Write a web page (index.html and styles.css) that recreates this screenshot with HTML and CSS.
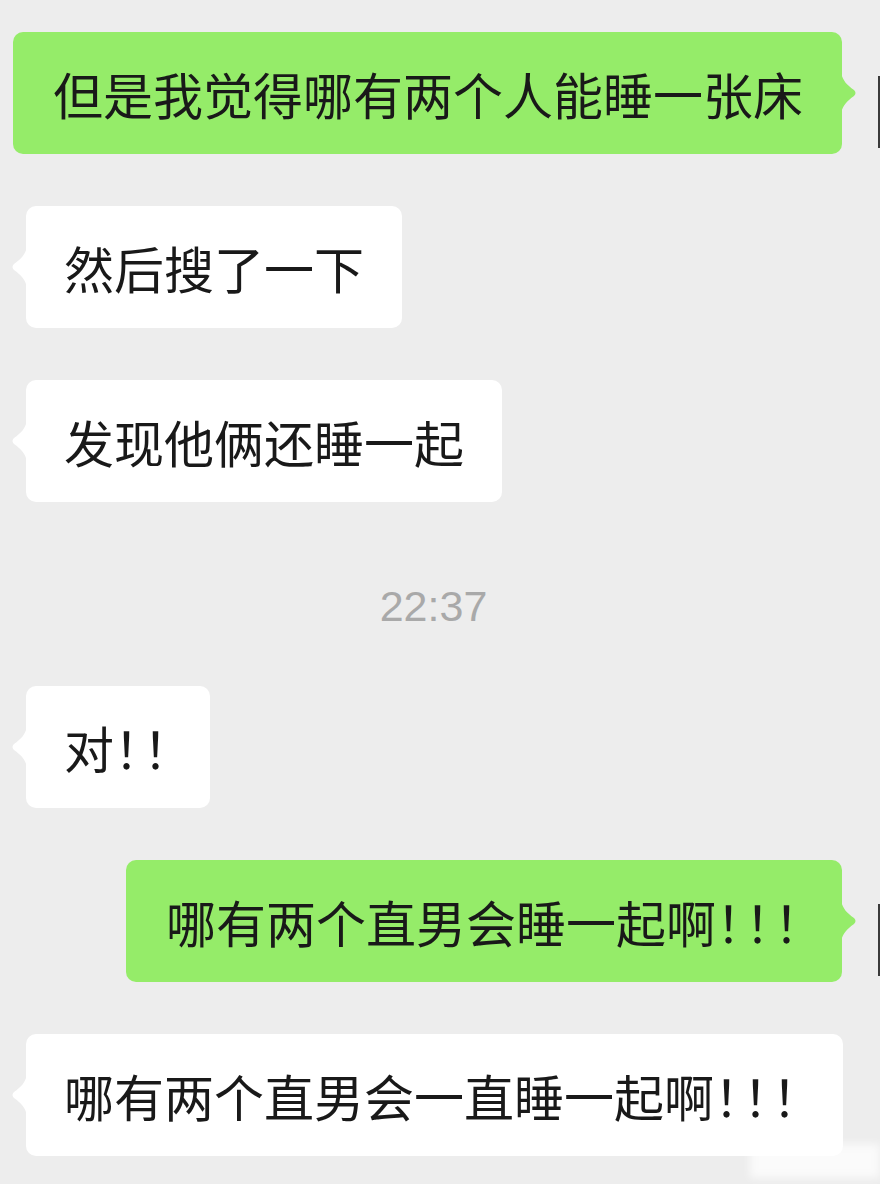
FILE: index.html
```html
<!DOCTYPE html>
<html lang="zh-CN">

<head>
  <meta charset="UTF-8">
  <meta name="viewport" content="width=device-width, initial-scale=1.0">
  <title>聊天记录</title>
  <link rel="stylesheet" href="styles.css">
</head>

<body>
  <main>
    <ul>
      <li class="row me">
        <p class="bubble">但是我觉得哪有两个人能睡一张床</p>
        <span class="avatar"></span>
      </li>
      <li class="row other">
        <p class="bubble">然后搜了一下</p>
      </li>
      <li class="row other">
        <p class="bubble">发现他俩还睡一起</p>
      </li>
      <li class="time">22:37</li>
      <li class="row other">
        <p class="bubble">对<span class="bang">！！</span></p>
      </li>
      <li class="row me">
        <p class="bubble">哪有两个直男会睡一起啊<span class="bang">！！！</span></p>
        <span class="avatar"></span>
      </li>
      <li class="row other">
        <p class="bubble wide">哪有两个直男会一直睡一起啊<span class="bang">！！！</span></p>
      </li>
    </ul>
  </main>

  <div class="watermark"></div>
</body>

</html>
```

FILE: styles.css
```css
body {
  margin: 0;
  background-color: #ededed;
  font-family: "Noto Sans CJK SC", "Noto Sans", sans-serif;
  color: #191919;
  overflow: hidden;
  height: 100vh;
  position: relative;
}

main {
  padding-top: 32px;
}

ul {
  display: flex;
  flex-direction: column;
  gap: 52px;
  list-style: none;
  margin: 0;
  padding: 0;
}

.row {
  display: flex;
  align-items: flex-start;

  &.other {
    padding-left: 26px;
  }

  &.me {
    justify-content: flex-end;
  }
}

.bubble {
  flex: none;
  position: relative;
  margin: 0;
  padding: 36px 38px;
  font-size: 50px;
  line-height: 50px;
  border-radius: 10px;
  white-space: nowrap;
  background-color: #fff;

  &::after {
    content: "";
    position: absolute;
    top: 50%;
    width: 16px;
    height: 40px;
    margin-top: -20px;
    background: inherit;
  }

  &.wide {
    padding-right: 42px;
  }
}

.other .bubble::after {
  left: -15px;
  clip-path: path("M16 0 C14 8 10 12 3 17 Q0 20 3 23 C10 28 14 32 16 40 Z");
}

.me .bubble {
  background-color: #95ec69;
  padding: 36px 39px 36px 40px;

  &::after {
    right: -15px;
    clip-path: path("M0 0 C2 8 6 12 13 17 Q16 20 13 23 C6 28 2 32 0 40 Z");
  }
}

.bang {
  font-feature-settings: "halt";
  letter-spacing: 4px;
}

/* only the edge of the avatar shows at the right */
.avatar {
  flex: none;
  width: 2px;
  height: 72px;
  margin: 44px 0 0 36px;
  background-color: #3a3a3a;
}

.time {
  padding: 27px 13px 3px 0;
  text-align: center;
  font-family: "Liberation Sans", Arial, sans-serif;
  font-size: 43px;
  line-height: 50px;
  color: #a9a9a9;
}

.watermark {
  position: absolute;
  right: 0;
  bottom: 6px;
  width: 130px;
  height: 34px;
  background: rgba(255, 255, 255, 0.75);
  filter: blur(4px);
}
```
